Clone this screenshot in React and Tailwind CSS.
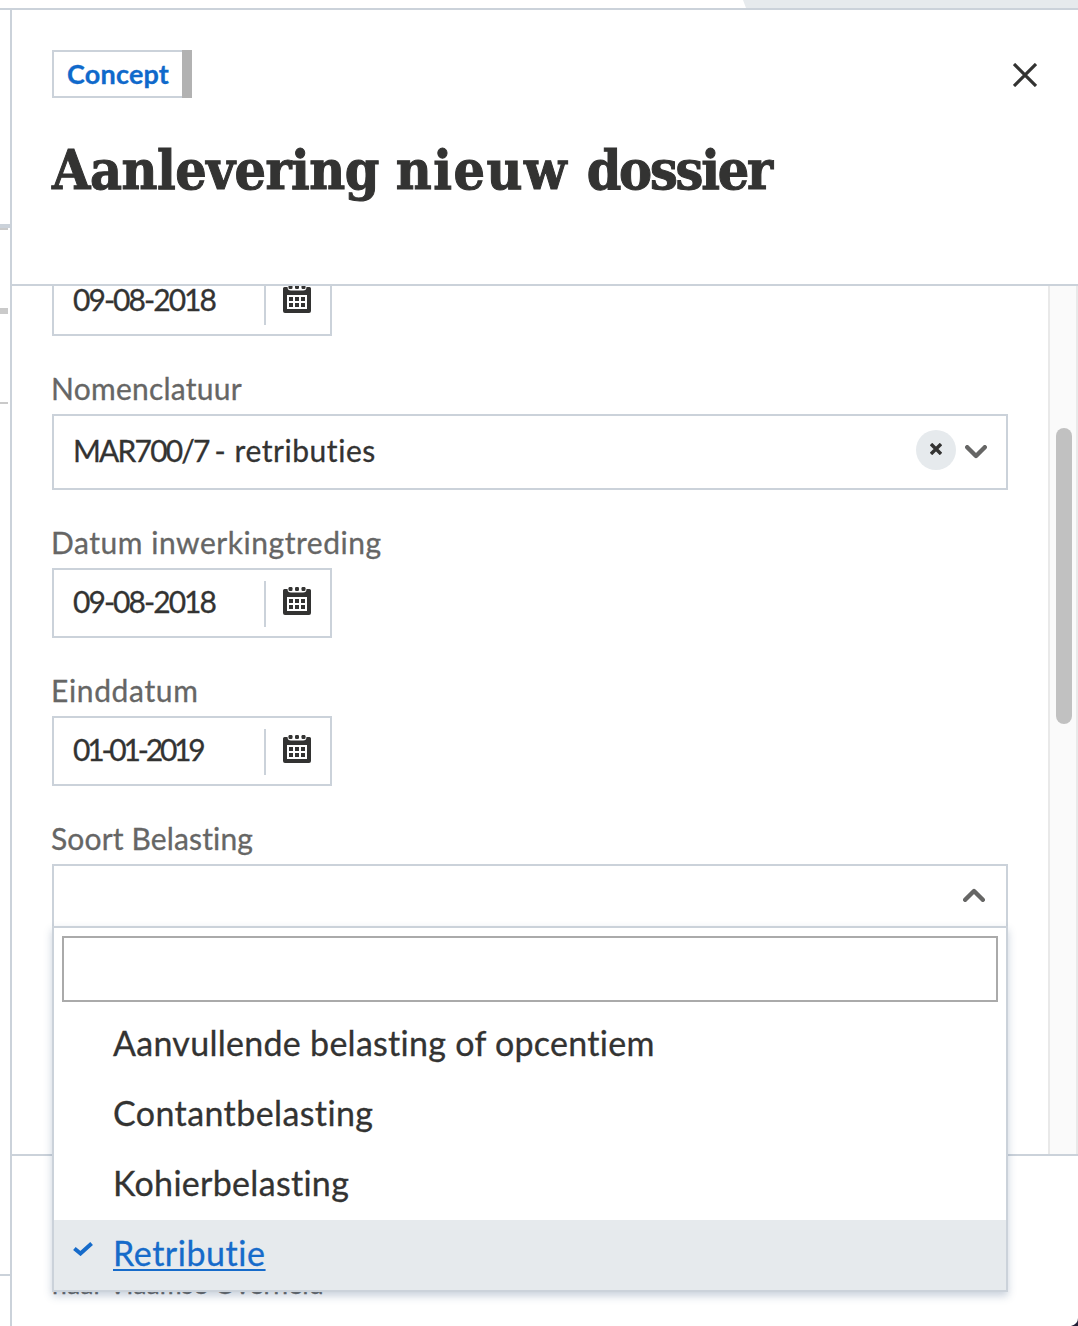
import React from "react";

function Calendar() {
  return (
    <svg viewBox="0 0 28 28" className="h-7 w-7 shrink-0" fill="#333332">
      <path
        fillRule="evenodd"
        d="M1.500 2H4.500Q4.500 5.500 8 5.500H20Q23.500 5.500 23.500 2H26.500Q28 2 28 3.500V26Q28 28 26 28H2Q0 28 0 26V3.500Q0 2 1.500 2ZM4 10V24H24V10Z"
      />
      <rect x="5.500" y="0" width="4" height="4" rx="1.200" />
      <rect x="12" y="0" width="4" height="4" rx="1.200" />
      <rect x="18.500" y="0" width="4" height="4" rx="1.200" />
      {[12, 18].map((y) =>
        [6, 12, 18].map((x) => <rect key={`${x}-${y}`} x={x} y={y} width="4" height="4" />)
      )}
    </svg>
  );
}

function DateField({ value, className = "tracking-[-1.95px]" }) {
  return (
    <div className="flex h-[70px] w-[280px] shrink-0 items-center border-2 border-[#cbd2da]">
      <span className={`w-[210px] pb-1 pl-[19px] text-[30px] leading-9 text-[#333332] ${className}`}>{value}</span>
      <span className="mt-[2px] h-[46px] w-[2px] bg-[#cbd2da]" />
      <span className="-mt-[4px] ml-[17px]">
        <Calendar />
      </span>
    </div>
  );
}

function Label({ children, className }) {
  return (
    <div className={`-ml-px h-[78px] shrink-0 pt-[34px] text-[30px] leading-9 text-[#666665] ${className}`}>{children}</div>
  );
}

const options = [
  { text: "Aanvullende belasting of opcentiem", className: "tracking-[0.28px]" },
  { text: "Contantbelasting", className: "tracking-[0.4px]" },
  { text: "Kohierbelasting", className: "tracking-[0.3px]" },
];

function Dropdown() {
  return (
    <div className="absolute top-[60px] -left-[2px] z-10 h-[366px] w-[956px] border-2 border-[#cbd2da] bg-white shadow-[0_4px_8px_rgba(60,90,130,0.28)]">
      <div className="mx-2 mt-2 h-[66px] border-2 border-[#aaaaaa]" />
      <ul className="mt-2 text-[34px] leading-[66px] text-[#333332]">
        {options.map((o) => (
          <li key={o.text} className={`h-[70px] pl-[59px] ${o.className}`}>
            {o.text}
          </li>
        ))}
        <li className="flex h-[70px] bg-[#e6eaed] text-[#166bca]">
          <svg viewBox="0 0 20 14" className="mt-[22px] ml-[19px] h-[14px] w-5" fill="none" stroke="#166bca" strokeWidth="4">
            <path d="M1.400 6.500L7.500 11.500L18.600 1.500" />
          </svg>
          <span className="ml-[20px] tracking-[0.55px] underline decoration-2 underline-offset-[3px]">Retributie</span>
        </li>
      </ul>
    </div>
  );
}

export default function App() {
  return (
    <div className="flex h-[1326px] w-[1078px] flex-col overflow-hidden bg-white font-['Lato',sans-serif] [-webkit-text-stroke:0.3px_currentColor]">
      <div className="flex h-[10px] shrink-0 justify-end border-b-2 border-[#cbd2da]">
        <div className="h-2 w-[335px] bg-[#e6eaed] [clip-path:polygon(0_0,100%_0,100%_100%,3px_100%)]" />
      </div>
      <div className="flex h-[1316px]">
        <div className="flex w-[10px] shrink-0 flex-col">
          <div className="mt-[214px] h-1 bg-[#cbd2da]" />
          <div className="h-[2px] w-2 bg-[#cacaca]" />
          <div className="mt-[78px] h-[6px] w-2 bg-[#cacaca]" />
          <div className="mt-[88px] h-[2px] w-2 bg-[#cacaca]" />
          <div className="mt-[870px] h-[2px] bg-[#cbd2da]" />
        </div>
        <div className="flex w-[1068px] flex-col border-l-2 border-[#cbd2da]">
          <header className="h-[276px] shrink-0 border-b-2 border-[#cbd2da] pt-10 pl-10">
            <div className="flex justify-between">
              <div className="flex h-12 w-[140px] border-2 border-r-0 border-[#cbd2da]">
                <span className="flex-1 pl-[13px] text-[27px] leading-[43px] font-bold tracking-[0.2px] text-[#0f69cb]">Concept</span>
                <span className="-my-[2px] w-[10px] bg-[#b2b2b2]" />
              </div>
              <svg viewBox="0 0 24 24" className="mt-[13px] mr-[41px] h-6 w-6" stroke="#333332" strokeWidth="3.200">
                <path d="M1 1L23 23M23 1L1 23" />
              </svg>
            </div>
            <h1 className="mt-[34px] text-[55px] leading-[76px] font-bold whitespace-nowrap text-[#333332] font-['DejaVu_Serif_Condensed','DejaVu_Serif',serif] [-webkit-text-stroke:1px_currentColor]">
              <span className="tracking-[-0.5px]">Aanlevering </span>
              <span className="tracking-[1.5px]">nieuw </span>
              <span className="tracking-[-2.2px]">dossier</span>
            </h1>
          </header>
          <div className="relative z-10 flex h-[868px] shrink-0">
            <div className="flex w-[1036px] flex-col pl-10">
              <div className="flex h-[50px] shrink-0 flex-col justify-end overflow-hidden">
                <DateField value="09-08-2018" />
              </div>
              <Label className="tracking-[0.25px]">Nomenclatuur</Label>
              <div className="flex h-[76px] w-[956px] shrink-0 items-center border-2 border-[#cbd2da]">
                <span className="flex-1 pb-1 pl-[19px] text-[30px] leading-9 text-[#333332]">
                  <span className="tracking-[-1.8px]">MAR700/7 </span>
                  <span className="tracking-[0.55px]">- retributies</span>
                </span>
                <span className="-mt-[4px] flex h-10 w-10 items-center justify-center rounded-full bg-[#e6eaed]">
                  <svg viewBox="0 0 12 12" className="-mt-[2px] h-3 w-3" stroke="#333332" strokeWidth="3.400">
                    <path d="M1 1L11 11M11 1L1 11" />
                  </svg>
                </span>
                <svg viewBox="0 0 22 14" className="mr-[19px] ml-[9px] h-[14px] w-[22px]" fill="none" stroke="#666665" strokeWidth="4.400" strokeLinecap="round" strokeLinejoin="round">
                  <path d="M2.200 2.200L11 11L19.800 2.200" />
                </svg>
              </div>
              <Label className="tracking-[0.53px]">Datum inwerkingtreding</Label>
              <DateField value="09-08-2018" />
              <Label className="tracking-[0.65px]">Einddatum</Label>
              <DateField value="01-01-2019" className="tracking-[-3.2px]" />
              <Label className="tracking-[0.15px]">Soort Belasting</Label>
              <div className="relative flex h-[64px] w-[956px] shrink-0 justify-end border-2 border-b-0 border-[#cbd2da]">
                <svg viewBox="0 0 22 14" className="mt-[22px] mr-[21px] h-[14px] w-[22px]" fill="none" stroke="#666665" strokeWidth="4.400" strokeLinecap="round" strokeLinejoin="round">
                  <path d="M2.200 11.800L11 3L19.800 11.800" />
                </svg>
                <Dropdown />
              </div>
            </div>
            <div className="w-[30px] border-x-2 border-x-[#e9e9e9] bg-[#fafafa] pt-[142px] pl-[6px]">
              <div className="h-[296px] w-4 rounded-full bg-[#c1c1c1]" />
            </div>
          </div>
          <footer className="relative flex h-[172px] shrink-0 items-end justify-between border-t-2 border-[#cbd2da]">
            <p className="mb-[26px] ml-10 text-[26.500px] leading-8 tracking-[0.15px] text-[#666665]">naar Vlaamse Overheid</p>
            <svg viewBox="0 0 8 8" className="h-2 w-2" fill="#222039">
              <path d="M8 0Q8 6 1 8H8Z" />
            </svg>
          </footer>
        </div>
      </div>
    </div>
  );
}
